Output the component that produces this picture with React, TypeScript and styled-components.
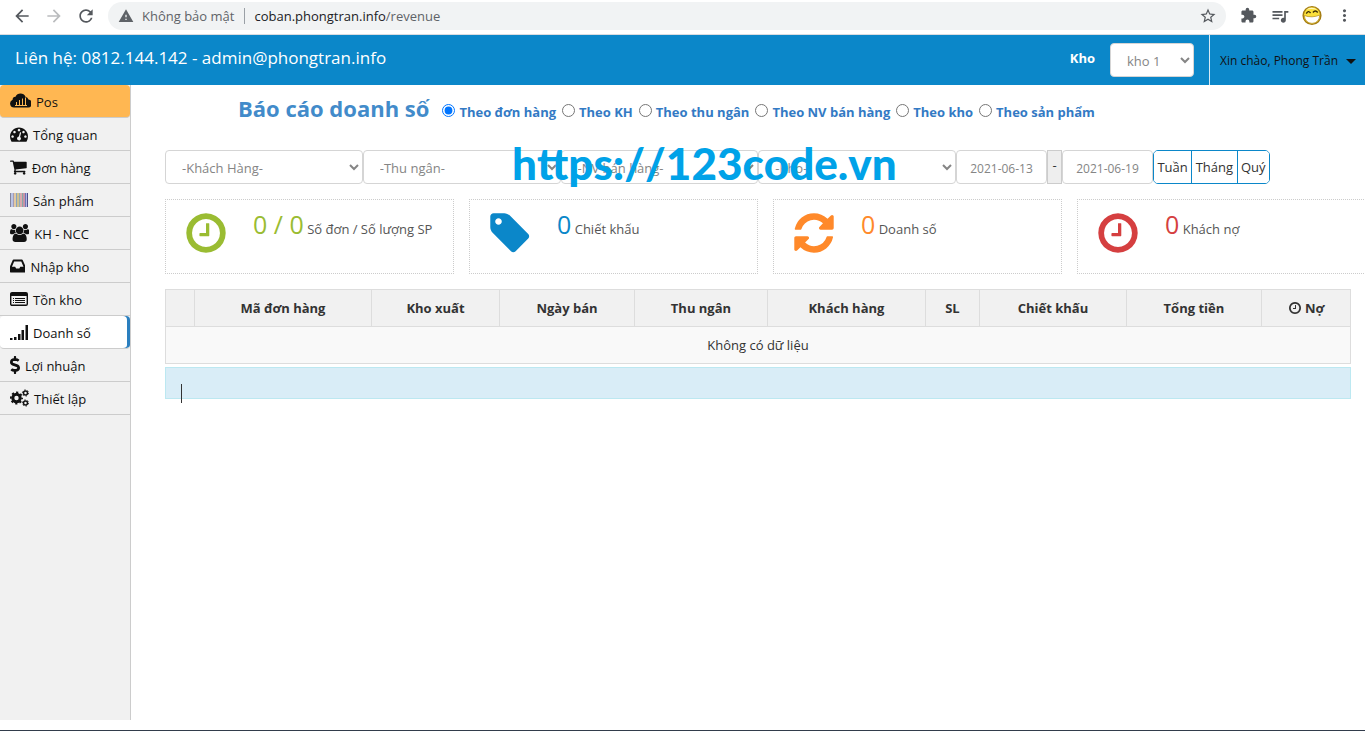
import React from 'react';
import styled, { createGlobalStyle } from 'styled-components';
import { FaDollarSign } from 'react-icons/fa';
import {
  MdArrowBack,
  MdArrowForward,
  MdExtension,
  MdMoreVert,
  MdQueueMusic,
  MdRefresh,
  MdStarBorder,
  MdWarning,
} from 'react-icons/md';

const GlobalStyle = createGlobalStyle`
  * { box-sizing: border-box; }
  body {
    margin: 0;
    background: #fff;
    color: #333;
    font: 13px/20px "Open Sans", "Noto Sans", sans-serif;
  }
  button, input, select { font: inherit; }
`;

/* ---------- icons ---------- */

const Glyph = ({ d, size, box = '0 0 1792 1792' }: { d: string; size: number; box?: string }) => (
  <svg viewBox={box} height={size} fill="currentColor" aria-hidden="true">
    <path d={d} />
  </svg>
);

const CLOCK =
  'M1024 544v448q0 14-9 23t-23 9h-320q-14 0-23-9t-9-23v-64q0-14 9-23t23-9h224v-352q0-14 9-23t23-9h64q14 0 23 9t9 23zm416 352q0-148-73-273t-198-198-273-73-273 73-198 198-73 273 73 273 198 198 273 73 273-73 198-198 73-273zm224 0q0 209-103 385.5t-279.5 279.5-385.5 103-385.5-103-279.5-279.5-103-385.5 103-385.5 279.5-279.5 385.5-103 385.5 103 279.5 279.5 103 385.5z';
const TAG =
  'M576 448q0-53-37.5-90.5t-90.5-37.5-90.5 37.5-37.5 90.5 37.5 90.5 90.5 37.5 90.5-37.5 37.5-90.5zm1067 576q0 53-37 90l-491 492q-39 37-91 37-53 0-90-37l-715-716q-38-37-64.5-101t-26.5-117v-416q0-52 38-90t90-38h416q53 0 117 26.5t102 64.5l715 714q37 39 37 91z';
const REFRESH =
  'M1639 1056q0 5-1 7-64 268-268 434.5t-478 166.5q-146 0-282.5-55t-243.5-157l-129 129q-19 19-45 19t-45-19-19-45v-448q0-26 19-45t45-19h448q26 0 45 19t19 45-19 45l-137 137q71 66 161 102t187 36q134 0 250-65t186-179q11-17 53-117 8-23 30-23h192q13 0 22.5 9.5t9.5 22.5zm25-800v448q0 26-19 45t-45 19h-448q-26 0-45-19t-19-45 19-45l138-138q-148-137-349-137-134 0-250 65t-186 179q-11 17-53 117-8 23-30 23h-199q-13 0-22.5-9.5t-9.5-22.5v-7q65-268 270-434.5t480-166.5q146 0 284 55.5t245 156.5l130-129q19-19 45-19t45 19 19 45z';
const GAUGE =
  'M384 1152q0-53-37.5-90.5t-90.5-37.5-90.5 37.5-37.5 90.5 37.5 90.5 90.5 37.5 90.5-37.5 37.5-90.5zm192-448q0-53-37.5-90.5t-90.5-37.5-90.5 37.5-37.5 90.5 37.5 90.5 90.5 37.5 90.5-37.5 37.5-90.5zm428 481l101-382q6-26-7.5-48.5t-38.5-29.5-48 6.5-30 39.5l-101 382q-60 5-107 43.5t-63 98.5q-20 77 20 146t117 89 146-20 89-117q16-60-6-117t-72-91zm660-33q0-53-37.5-90.5t-90.5-37.5-90.5 37.5-37.5 90.5 37.5 90.5 90.5 37.5 90.5-37.5 37.5-90.5zm-640-640q0-53-37.5-90.5t-90.5-37.5-90.5 37.5-37.5 90.5 37.5 90.5 90.5 37.5 90.5-37.5 37.5-90.5zm448 192q0-53-37.5-90.5t-90.5-37.5-90.5 37.5-37.5 90.5 37.5 90.5 90.5 37.5 90.5-37.5 37.5-90.5zm320 448q0 261-141 483-19 29-54 29h-1402q-35 0-54-29-141-221-141-483 0-182 71-348t191-286 286-191 348-71 348 71 286 191 191 286 71 348z';
const CART =
  'M704 1536q0 52-38 90t-90 38-90-38-38-90 38-90 90-38 90 38 38 90zm896 0q0 52-38 90t-90 38-90-38-38-90 38-90 90-38 90 38 38 90zm128-1088v512q0 24-16.5 42.5t-40.5 21.5l-1044 122q13 60 13 70 0 16-24 64h920q26 0 45 19t19 45-19 45-45 19h-1024q-26 0-45-19t-19-45q0-11 8-31.5t16-36 21.5-40 15.5-29.5l-177-823h-204q-26 0-45-19t-19-45 19-45 45-19h256q16 0 28.5 6.5t19.5 15.5 13 24.5 8 26 5.5 29.5 4.5 26h1201q26 0 45 19t19 45z';
const INBOX =
  'M1151 960h316q-1-3-2.5-8t-2.5-8l-212-496h-708l-212 496q-1 2-2.5 8t-2.5 8h316l95 192h320zm513 30v482q0 26-19 45t-45 19h-1408q-26 0-45-19t-19-45v-482q0-62 25-123l238-552q10-25 36.5-42t52.5-17h832q26 0 52.5 17t36.5 42l238 552q25 61 25 123z';
const USERS =
  'M593 896q-162 5-265 128h-134q-82 0-138-40.5t-56-118.5q0-353 124-353 6 0 43.5 21t97.5 42.5 119 21.5q67 0 133-23-5 37-5 66 0 139 81 256zm1071 637q0 120-73 189.5t-194 69.5h-874q-121 0-194-69.5t-73-189.5q0-53 3.5-103.5t14-109 26.5-108.5 43-97.5 62-81 85.5-53.5 111.5-20q10 0 43 21.5t73 48 107 48 135 21.5 135-21.5 107-48 73-48 43-21.5q61 0 111.5 20t85.5 53.5 62 81 43 97.5 26.5 108.5 14 109 3.5 103.5zm-1024-1277q0 106-75 181t-181 75-181-75-75-181 75-181 181-75 181 75 75 181zm704 384q0 159-112.5 271.5t-271.5 112.5-271.5-112.5-112.5-271.5 112.5-271.5 271.5-112.5 271.5 112.5 112.5 271.5zm576 225q0 78-56 118.5t-138 40.5h-134q-103-123-265-128 81-117 81-256 0-29-5-66 66 23 133 23 59 0 119-21.5t97.5-42.5 43.5-21q124 0 124 353zm-128-609q0 106-75 181t-181 75-181-75-75-181 75-181 181-75 181 75 75 181z';

const CloudChart = () => (
  <svg width="21" height="16" viewBox="0 0 21 16" aria-hidden="true">
    <path
      fill="currentColor"
      d="M4 14.500A4 4 0 0 1 2.600 6.800A3 3 0 0 1 5.500 3.800A5.500 5.500 0 0 1 15.500 3.800A4 4 0 0 1 18.500 6.600A4 4 0 0 1 17 14.500z"
    />
    <path stroke="#ffb752" strokeWidth="1" d="M6.500 12V9M9.500 12V7M12.500 12V5.500M15.500 12V4.500M5 12.500h12" />
  </svg>
);

const BARS: [number, number, string][] = [
  [0, 1, '#85859a'], [1, 2, '#b9c3e6'], [3, 1, '#a69db4'], [4, 2, '#e3c9a0'], [6, 1, '#86a3c0'],
  [7, 2, '#cfc08f'], [9, 1, '#96aab6'], [10, 2, '#d9a9ae'], [12, 1, '#85aaa5'], [13, 2, '#c893a5'],
  [15, 1, '#6d77b8'], [16, 1, '#b4b8e4'], [17, 1, '#4f4f88'],
];
const Barcode = () => (
  <svg width="18" height="14" viewBox="0 0 18 14" shapeRendering="crispEdges" aria-hidden="true">
    {BARS.map(([x, w, c]) => (
      <rect key={x} x={x} width={w} height="14" fill={c} />
    ))}
  </svg>
);

const ListBox = () => (
  <svg width="18" height="14" viewBox="0 0 18 14" aria-hidden="true">
    <rect x=".7" y=".7" width="16.600" height="12.600" rx="1.300" fill="none" stroke="currentColor" strokeWidth="1.400" />
    <path fill="currentColor" d="M1 1h16v3H1z" />
    <path stroke="currentColor" d="M3 6.500h1M5 6.500h10M3 8.500h1M5 8.500h10M3 10.500h1M5 10.500h10" />
  </svg>
);

const Signal = () => (
  <svg width="18" height="15" viewBox="0 0 18 15" fill="currentColor" aria-hidden="true">
    <path d="M0 13h2.500v2H0zM4 12h2.500v3H4zM8 9h2.500v6H8zM11.500 5H14v10h-2.500zM15.500 0H18v15h-2.500z" />
  </svg>
);

const Gears = () => (
  <svg width="19" height="18" viewBox="0 0 19 18" fill="none" stroke="currentColor" aria-hidden="true">
    <circle cx="6.500" cy="9" r="3.700" strokeWidth="3" />
    <circle cx="6.500" cy="9" r="5.600" strokeWidth="1.800" strokeDasharray="2.200 2.198" strokeDashoffset="1.100" />
    <circle cx="15.500" cy="4" r="2" strokeWidth="1.500" />
    <circle cx="15.500" cy="4" r="3.100" strokeWidth="1" strokeDasharray="1.300 1.946" />
    <circle cx="15.500" cy="14" r="2" strokeWidth="1.500" />
    <circle cx="15.500" cy="14" r="3.100" strokeWidth="1" strokeDasharray="1.300 1.946" />
  </svg>
);

const Dollar = styled(FaDollarSign)`
  width: 10px;
`;

const Smiley = () => (
  <svg width="21" height="21" viewBox="0 0 21 21" aria-hidden="true">
    <circle cx="10.500" cy="10.500" r="9.300" fill="#fbe03a" stroke="#a47c12" strokeWidth="1.500" />
    <path d="M4 4.500Q10 0 16 4.500Q10 3 4 4.500z" fill="#fff8bd" />
    <path d="M2.300 10.500Q10.500 13.500 18.700 10Q18 18.500 10.500 18.800Q3.500 18.500 2.300 10.500z" fill="#fff" stroke="#b8901c" strokeWidth=".8" />
    <path d="M4.500 8.500Q6.500 4.800 9 7.800M11.500 7.300Q14 4.300 16.500 7.300" fill="none" stroke="#3b2c05" strokeWidth="1.500" />
  </svg>
);

/* ---------- browser bar ---------- */

const Page = styled.div`
  display: flex;
  flex-direction: column;
  min-height: 100vh;
  overflow: hidden;
  border-bottom: 1px solid #323c4b;
`;

const BrowserBar = styled.div`
  display: flex;
  align-items: center;
  height: 35px;
  padding: 0 11px 3px 12px;
  gap: 12px;
  border-bottom: 1px solid #dadce0;
  color: #5f6368;
`;

const ToolButton = styled.button<{ $faded?: boolean }>`
  display: flex;
  align-items: center;
  justify-content: center;
  width: 20px;
  height: 20px;
  padding: 0;
  border: 0;
  background: none;
  color: ${(p) => (p.$faded ? '#babcbe' : '#54585d')};
`;

const AddressBar = styled.div`
  display: flex;
  flex: 1;
  align-items: center;
  height: 28px;
  padding: 0 8px 0 10px;
  gap: 8px;
  border-radius: 14px;
  background: #f1f3f4;
`;

const SecurityNote = styled.span`
  padding-right: 10px;
  margin-right: 1px;
  border-right: 1px solid #9aa0a6;
  line-height: 16px;
`;

const Url = styled.span`
  flex: 1;
  color: #5f6368;
  b { color: #202124; font-weight: 400; }
`;

const ToolGroup = styled.div`
  display: flex;
  align-items: center;
  gap: 12px;
`;

/* ---------- app header ---------- */

const Header = styled.header`
  display: flex;
  align-items: center;
  height: 50px;
  background: #0b87c9;
  color: #fff;
`;

const Contact = styled.div`
  flex: 1;
  padding: 0 0 4px 15px;
  font-size: 17px;
  line-height: 24px;
`;

const StoreLabel = styled.label`
  padding-bottom: 4px;
  margin-right: 15px;
  font-weight: 700;
`;

const Select = styled.select`
  height: 34px;
  padding: 2px 12px 0;
  border: 1px solid #d5d5d5;
  border-radius: 4px;
  background: #fff;
  color: #858585;
`;

const StoreSelect = styled(Select)`
  width: 84px;
`;

const UserMenu = styled.button`
  display: flex;
  align-items: center;
  align-self: stretch;
  min-width: 156px;
  margin-left: 15px;
  padding: 2px 9px 0 10px;
  border: 0;
  border-left: 1px solid #d6eaf5;
  background: none;
  color: #111;
  font-size: 12px;
  &::after {
    content: '';
    margin-left: auto;
    border: 5px solid transparent;
    border-top-color: #111;
    border-bottom: 0;
  }
`;

/* ---------- body ---------- */

const Body = styled.div`
  display: flex;
  flex: 1;
  margin-bottom: 10px;
`;

const Sidebar = styled.nav`
  flex: 0 0 131px;
  border-right: 1px solid #ccc;
  background: #f1f1f1;
`;

const NavLink = styled.a<{ $tone?: 'pos' | 'current' }>`
  display: flex;
  align-items: center;
  gap: 5px;
  height: 33px;
  padding-left: 10px;
  border-bottom: 1px solid #ccc;
  color: #111;
  text-decoration: none;
  ${(p) => p.$tone === 'pos' && 'background: #ffb752; border-radius: 4px;'}
  ${(p) => p.$tone === 'current' && 'background: #fff; box-shadow: inset -3px 0 #2a7fbf; border-radius: 4px;'}
  span { padding-top: 2px; }
  svg { flex: none; }
`;

const Main = styled.main`
  flex: 1;
  min-width: 0;
  padding: 0 14px 0 34px;
`;

const TitleRow = styled.div`
  display: flex;
  align-items: center;
  height: 50px;
  padding-left: 73px;
  gap: 13px;
  color: #337ac4;
`;

const Title = styled.h1`
  margin: 0;
  padding-bottom: 4px;
  color: #428bca;
  font-size: 22px;
  line-height: 32px;
  white-space: nowrap;
`;

const Options = styled.div`
  display: flex;
  gap: 6px;
  padding-top: 4px;
`;

const Option = styled.label`
  display: flex;
  gap: 4px;
  font-weight: 700;
  white-space: nowrap;
  input { width: 13px; height: 13px; margin: 2px 0 0; }
`;

const Filters = styled.div`
  position: relative;
  display: flex;
  margin-top: 15px;
  padding-right: 81px;
`;

const FilterSelect = styled(Select)`
  flex: 1;
  min-width: 0;
`;

const DateInput = styled.input`
  width: 91px;
  height: 34px;
  padding: 2px 0 0;
  border: 1px solid #d5d5d5;
  border-radius: 4px;
  color: #858585;
  font-size: 12px;
  text-align: center;
`;

const Addon = styled.span`
  width: 15px;
  border: 1px solid #ccc;
  background: #eee;
  line-height: 28px;
  text-align: center;
`;

const Periods = styled.div`
  display: flex;
  min-width: 117px;
  overflow: hidden;
  border: 1px solid #0b87c9;
  border-radius: 5px;
`;

const Period = styled.button`
  flex: 1 1 auto;
  padding: 0 3px;
  border: 0;
  background: #fff;
  color: #333;
  & + & { border-left: 1px solid #0b87c9; }
`;

const Watermark = styled.div`
  position: absolute;
  top: -15px;
  left: 347px;
  color: #00a2e8;
  font: 900 44px/56px Lato, sans-serif;
  font-kerning: none;
  pointer-events: none;
`;

const Stats = styled.div`
  display: grid;
  grid-template-columns: repeat(4, 1fr);
  gap: 15px;
  margin: 15px -15px 15px 0;
`;

const Stat = styled.div<{ $color: string }>`
  display: flex;
  align-items: flex-start;
  height: 75px;
  padding: 10px 0 0 17px;
  border: 1px dotted #ccc;
  color: ${(p) => p.$color};
  > svg { flex: none; margin-right: 24px; }
`;

const Figure = styled.div`
  white-space: nowrap;
  line-height: 28px;
  strong { font-size: 25px; font-weight: 400; }
  span { color: #555; }
`;

const Table = styled.table`
  width: 100%;
  border-collapse: collapse;
  table-layout: fixed;
  th, td {
    height: 37px;
    padding: 0;
    border: 1px solid #ddd;
    text-align: center;
  }
  th { background: #f1f1f1; }
  td { background: #f9f9f9; }
  svg { vertical-align: -2px; }
`;

const Summary = styled.div`
  position: relative;
  height: 32px;
  margin-top: 3px;
  border: 1px solid #bce8f1;
  background: #d9edf7;
`;

const TextCursor = styled.i`
  position: absolute;
  top: 16px;
  left: 15px;
  width: 1px;
  height: 19px;
  background: #333;
`;

const NAV: { label: string; icon: React.ReactNode; tone?: 'pos' | 'current' }[] = [
  { label: 'Pos', icon: <CloudChart />, tone: 'pos' },
  { label: 'Tổng quan', icon: <Glyph d={GAUGE} size={18} /> },
  { label: 'Đơn hàng', icon: <Glyph d={CART} size={18} box="64 0 1664 1792" /> },
  { label: 'Sản phẩm', icon: <Barcode /> },
  { label: 'KH - NCC', icon: <Glyph d={USERS} size={18} box="0 0 1920 1792" /> },
  { label: 'Nhập kho', icon: <Glyph d={INBOX} size={18} box="128 0 1536 1792" /> },
  { label: 'Tồn kho', icon: <ListBox /> },
  { label: 'Doanh số', icon: <Signal />, tone: 'current' },
  { label: 'Lợi nhuận', icon: <Dollar size={18} /> },
  { label: 'Thiết lập', icon: <Gears /> },
];

const MODES = ['Theo đơn hàng', 'Theo KH', 'Theo thu ngân', 'Theo NV bán hàng', 'Theo kho', 'Theo sản phẩm'];
const FILTERS = ['-Khách Hàng-', '-Thu ngân-', '-NV bán hàng-', '-Kho-'];

const STATS = [
  { value: '0 / 0', label: 'Số đơn / Số lượng SP', color: '#9abc32', icon: CLOCK },
  { value: '0', label: 'Chiết khấu', color: '#0b87c9', icon: TAG },
  { value: '0', label: 'Doanh số', color: '#ff892a', icon: REFRESH },
  { value: '0', label: 'Khách nợ', color: '#d53f40', icon: CLOCK },
];

const COLUMNS: [string, number][] = [
  ['', 29], ['Mã đơn hàng', 177], ['Kho xuất', 128], ['Ngày bán', 135], ['Thu ngân', 133],
  ['Khách hàng', 158], ['SL', 54], ['Chiết khấu', 147], ['Tổng tiền', 135], ['Nợ', 89],
];
const TOTAL = COLUMNS.reduce((sum, [, w]) => sum + w, 0);

export default function App() {
  return (
    <Page>
      <GlobalStyle />
      <BrowserBar>
        <ToolButton aria-label="Back"><MdArrowBack size={20} /></ToolButton>
        <ToolButton aria-label="Forward" $faded><MdArrowForward size={20} /></ToolButton>
        <ToolButton aria-label="Reload"><MdRefresh size={20} /></ToolButton>
        <AddressBar>
          <MdWarning size={16} />
          <SecurityNote>Không bảo mật</SecurityNote>
          <Url><b>coban.phongtran.info</b>/revenue</Url>
          <ToolButton aria-label="Bookmark"><MdStarBorder size={18} /></ToolButton>
        </AddressBar>
        <ToolGroup>
          <ToolButton aria-label="Extensions"><MdExtension size={17} /></ToolButton>
          <ToolButton aria-label="Media"><MdQueueMusic size={20} /></ToolButton>
          <ToolButton aria-label="Profile"><Smiley /></ToolButton>
          <ToolButton aria-label="More"><MdMoreVert size={19} /></ToolButton>
        </ToolGroup>
      </BrowserBar>

      <Header>
        <Contact>Liên hệ: 0812.144.142 - admin@phongtran.info</Contact>
        <StoreLabel htmlFor="store">Kho</StoreLabel>
        <StoreSelect id="store"><option>kho 1</option></StoreSelect>
        <UserMenu>Xin chào, Phong Trần</UserMenu>
      </Header>

      <Body>
        <Sidebar>
          {NAV.map((item) => (
            <NavLink key={item.label} href="#" $tone={item.tone}>
              {item.icon}
              <span>{item.label}</span>
            </NavLink>
          ))}
        </Sidebar>

        <Main>
          <TitleRow>
            <Title>Báo cáo doanh số</Title>
            <Options>
              {MODES.map((mode, i) => (
                <Option key={mode}>
                  <input type="radio" name="mode" defaultChecked={i === 0} />
                  {mode}
                </Option>
              ))}
            </Options>
          </TitleRow>

          <Filters>
            {FILTERS.map((f) => (
              <FilterSelect key={f} aria-label={f}><option>{f}</option></FilterSelect>
            ))}
            <DateInput aria-label="Từ ngày" defaultValue="2021-06-13" />
            <Addon>-</Addon>
            <DateInput aria-label="Đến ngày" defaultValue="2021-06-19" />
            <Periods>
              <Period>Tuần</Period>
              <Period>Tháng</Period>
              <Period>Quý</Period>
            </Periods>
            <Watermark>https://123code.vn</Watermark>
          </Filters>

          <Stats>
            {STATS.map((s) => (
              <Stat key={s.label} $color={s.color}>
                <Glyph d={s.icon} size={46} />
                <Figure><strong>{s.value}</strong> <span>{s.label}</span></Figure>
              </Stat>
            ))}
          </Stats>

          <Table>
            <colgroup>
              {COLUMNS.map(([name, w]) => (
                <col key={name} style={{ width: `${(w / TOTAL) * 100}%` }} />
              ))}
            </colgroup>
            <thead>
              <tr>
                {COLUMNS.map(([name]) => (
                  <th key={name} scope="col">
                    {name === 'Nợ' && <Glyph d={CLOCK} size={14} />} {name}
                  </th>
                ))}
              </tr>
            </thead>
            <tbody>
              <tr><td colSpan={COLUMNS.length}>Không có dữ liệu</td></tr>
            </tbody>
          </Table>
          <Summary><TextCursor /></Summary>
        </Main>
      </Body>
    </Page>
  );
}
